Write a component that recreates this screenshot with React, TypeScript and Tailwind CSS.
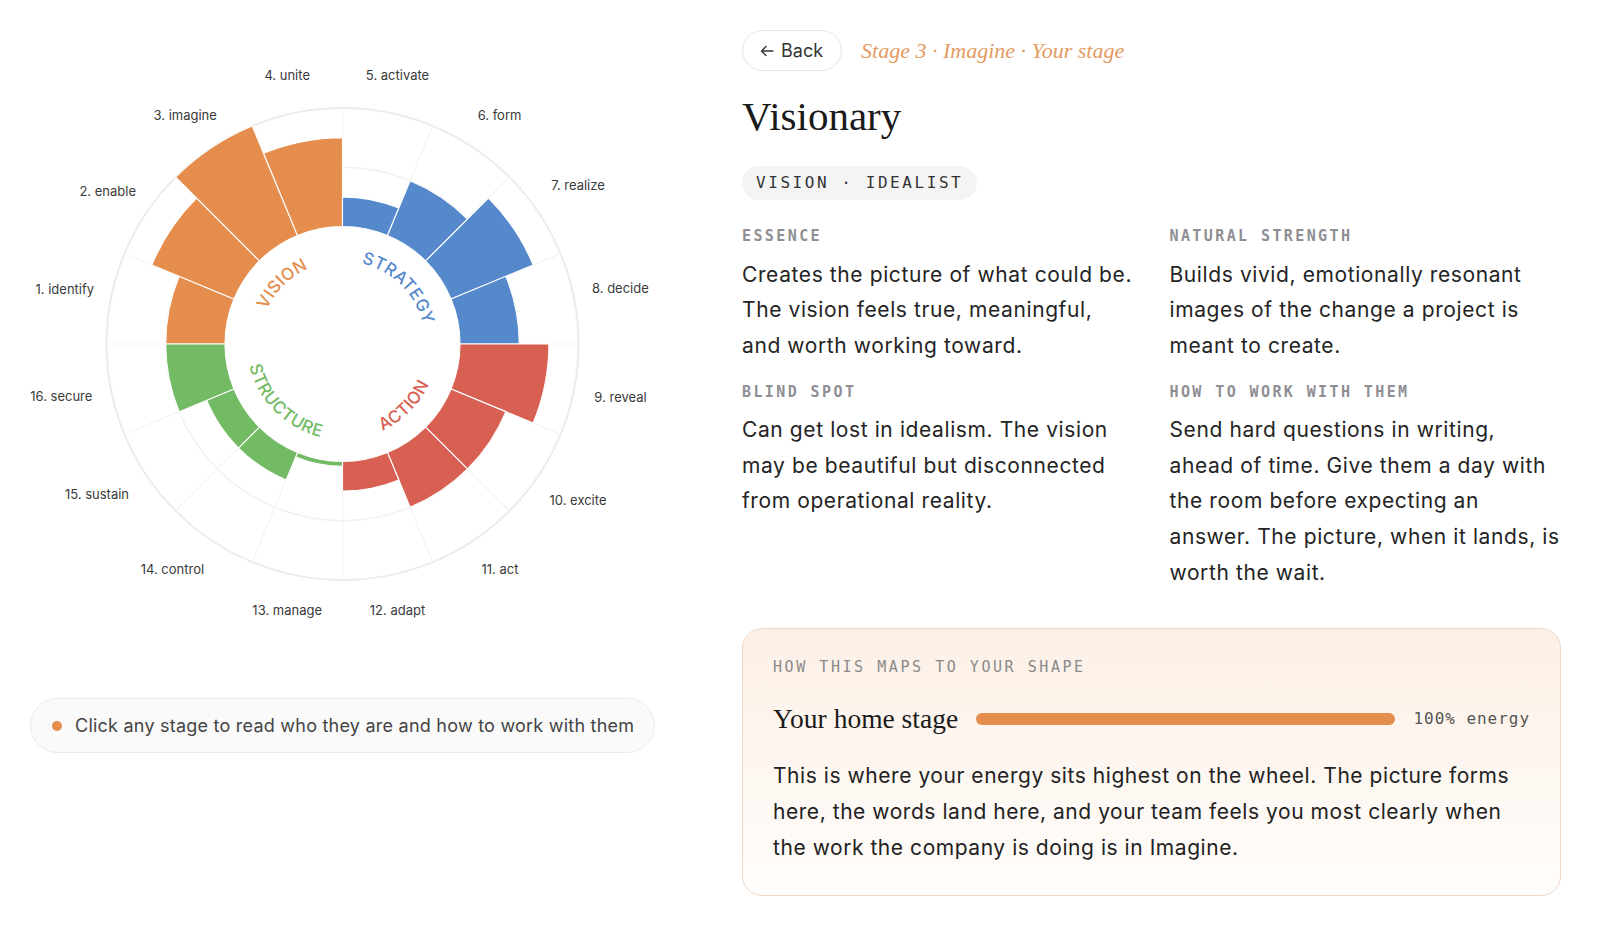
import React from "react";

const CX = 342.5;
const CY = 344;
const R0 = 117.5;
const SPAN = 118.5;
const ROUT = R0 + SPAN;

const ORANGE = "#E48D4D";
const BLUE = "#5689CC";
const RED = "#D86053";
const GREEN = "#72BA64";

type Stage = { name: string; value: number; color: string; lx: number; ly: number };

const stages: Stage[] = [
  { name: "1. identify", value: 0.5, color: ORANGE, lx: 64.8, ly: 288.8 },
  { name: "2. enable", value: 0.75, color: ORANGE, lx: 107.7, ly: 190.8 },
  { name: "3. imagine", value: 1.0, color: ORANGE, lx: 185.2, ly: 115.3 },
  { name: "4. unite", value: 0.75, color: ORANGE, lx: 287.2, ly: 74.5 },
  { name: "5. activate", value: 0.25, color: BLUE, lx: 397.5, ly: 74.5 },
  { name: "6. form", value: 0.5, color: BLUE, lx: 499.5, ly: 115.3 },
  { name: "7. realize", value: 0.75, color: BLUE, lx: 578, ly: 184.7 },
  { name: "8. decide", value: 0.5, color: BLUE, lx: 620.4, ly: 287.8 },
  { name: "9. reveal", value: 0.75, color: RED, lx: 620.5, ly: 397 },
  { name: "10. excite", value: 0.5, color: RED, lx: 578, ly: 500 },
  { name: "11. act", value: 0.5, color: RED, lx: 500, ly: 569.4 },
  { name: "12. adapt", value: 0.25, color: RED, lx: 397.5, ly: 610 },
  { name: "13. manage", value: 0.04, color: GREEN, lx: 287.2, ly: 610 },
  { name: "14. control", value: 0.25, color: GREEN, lx: 172.4, ly: 569.4 },
  { name: "15. sustain", value: 0.25, color: GREEN, lx: 97, ly: 494 },
  { name: "16. secure", value: 0.5, color: GREEN, lx: 61.3, ly: 396 },
];

function pt(r: number, deg: number): string {
  const a = (deg * Math.PI) / 180;
  return `${(CX + r * Math.cos(a)).toFixed(2)} ${(CY - r * Math.sin(a)).toFixed(2)}`;
}

function sector(r0: number, r1: number, a0: number, a1: number): string {
  return `M ${pt(r1, a0)} A ${r1} ${r1} 0 0 1 ${pt(r1, a1)} L ${pt(r0, a1)} A ${r0} ${r0} 0 0 0 ${pt(r0, a0)} Z`;
}

function Wheel() {
  const rTop = 83;
  const rBot = 95.5;
  return (
    <svg width={684} height={660} viewBox="0 0 684 660" className="block">
      <defs>
        <path id="arc-vision" d={`M ${pt(rTop, 180)} A ${rTop} ${rTop} 0 0 1 ${pt(rTop, 90)}`} />
        <path id="arc-strategy" d={`M ${pt(rTop, 90)} A ${rTop} ${rTop} 0 0 1 ${pt(rTop, 0)}`} />
        <path id="arc-structure" d={`M ${pt(rBot, 180)} A ${rBot} ${rBot} 0 0 0 ${pt(rBot, 270)}`} />
        <path id="arc-action" d={`M ${pt(rBot, 270)} A ${rBot} ${rBot} 0 0 0 ${pt(rBot, 360)}`} />
      </defs>

      {/* grid rings and spokes */}
      <circle cx={CX} cy={CY} r={ROUT} fill="none" stroke="#ececec" strokeWidth={2} />
      <circle cx={CX} cy={CY} r={R0 + SPAN / 2} fill="none" stroke="#f1f1f1" strokeWidth={1.5} />
      {Array.from({ length: 16 }).map((_, i) => {
        const a = 180 - 22.5 * i;
        return (
          <path key={i} d={`M ${pt(R0, a)} L ${pt(ROUT, a)}`} stroke="#f3f3f3" strokeWidth={1.2} />
        );
      })}

      {/* stage bars */}
      {stages.map((s, i) => {
        const a0 = 180 - 22.5 * i;
        const a1 = a0 - 22.5;
        return (
          <path
            key={s.name}
            d={sector(R0, R0 + SPAN * s.value, a0, a1)}
            fill={s.color}
            stroke="#ffffff"
            strokeWidth={1.1}
          />
        );
      })}

      {/* stage names */}
      {stages.map((s) => (
        <text
          key={`l-${s.name}`}
          x={s.lx}
          y={s.ly}
          textAnchor="middle"
          dominantBaseline="central"
          fontFamily="Inter, 'Noto Sans', sans-serif"
          fontSize={13}
          fill="#3a3a3a"
        >
          {s.name}
        </text>
      ))}

      {/* quadrant names */}
      <g fontFamily="Inter, 'Noto Sans', sans-serif" fontSize={17} fontWeight={500} letterSpacing={0.3}>
        <text fill={ORANGE}>
          <textPath href="#arc-vision" startOffset="50%" textAnchor="middle">VISION</textPath>
        </text>
        <text fill={BLUE}>
          <textPath href="#arc-strategy" startOffset="50%" textAnchor="middle">STRATEGY</textPath>
        </text>
        <text fill={GREEN}>
          <textPath href="#arc-structure" startOffset="50%" textAnchor="middle">STRUCTURE</textPath>
        </text>
        <text fill={RED}>
          <textPath href="#arc-action" startOffset="50%" textAnchor="middle">ACTION</textPath>
        </text>
      </g>
    </svg>
  );
}

function Field({ label, children }: { label: string; children: React.ReactNode }) {
  return (
    <div className="flex flex-col">
      <div className="font-['DejaVu_Sans_Mono',monospace] text-[15px] leading-[19.5px] font-bold tracking-[0.16em] text-[#8e8e93]">
        {label}
      </div>
      <p className="mt-[10px] text-[21px] leading-[1.7] tracking-[0.6px] text-[#242424]">{children}</p>
    </div>
  );
}

export default function App() {
  return (
    <div className="flex w-full h-[928px] bg-white font-['Inter','Noto_Sans',sans-serif] text-[#222] overflow-hidden">
      {/* wheel column */}
      <div className="w-[684px] shrink-0 flex flex-col">
        <Wheel />
        <div className="ml-[30px] mt-[38px] w-[625px] h-[55px] rounded-full border border-[#ebebeb] bg-[#fafafa] flex items-center pl-[21px] gap-[13px]">
          <span className="w-[10px] h-[10px] rounded-full bg-[#E48D4D] shrink-0" />
          <span className="text-[18px] tracking-[0.23px] text-[#444] whitespace-nowrap">
            Click any stage to read who they are and how to work with them
          </span>
        </div>
      </div>

      {/* detail column */}
      <div className="ml-[58px] w-[819px] shrink-0 pt-[30px] flex flex-col">
        <div className="flex items-center h-[41px] gap-[19px]">
          <button className="h-[41px] flex items-center gap-[7px] pl-[17px] pr-[18px] rounded-full border border-[#e6e6e6] bg-white text-[18px] text-[#333]">
            <svg width="14" height="12" viewBox="0 0 14 12" fill="none">
              <path d="M13 6H1.5M6 1.5 1.5 6 6 10.5" stroke="#333" strokeWidth="1.4" strokeLinecap="round" strokeLinejoin="round" />
            </svg>
            <span>Back</span>
          </button>
          <span className="font-['Liberation_Serif',serif] italic text-[22px] text-[#E39A62] whitespace-nowrap">
            Stage 3 · Imagine · Your stage
          </span>
        </div>

        <h1 className="mt-[21px] font-['Liberation_Serif',serif] text-[41px] leading-[48px] text-[#1a1a1a]">
          Visionary
        </h1>

        <div className="mt-[26px] self-start h-[34px] flex items-center px-[14px] rounded-full bg-[#f4f4f5] font-['DejaVu_Sans_Mono',monospace] text-[16px] tracking-[0.16em] text-[#333]">
          VISION · IDEALIST
        </div>

        <div className="mt-[27px] grid grid-cols-2 gap-x-[36px] gap-y-[19px]">
          <Field label="ESSENCE">
            Creates the picture of what could be. The vision feels true, meaningful, and worth working toward.
          </Field>
          <Field label="NATURAL STRENGTH">
            Builds vivid, emotionally resonant images of the change a project is meant to create.
          </Field>
          <Field label="BLIND SPOT">
            Can get lost in idealism. The vision may be beautiful but disconnected from operational reality.
          </Field>
          <Field label="HOW TO WORK WITH THEM">
            Send hard questions in writing, ahead of time. Give them a day with the room before expecting an answer. The picture, when it lands, is worth the wait.
          </Field>
        </div>

        <div className="mt-[37px] rounded-[20px] border border-[#f1d8c4] bg-linear-to-b from-[#fcf0e6] to-[#fffdfb] px-[30px] pt-[28px] pb-[29px]">
          <div className="font-['DejaVu_Sans_Mono',monospace] text-[15px] leading-[20px] tracking-[0.17em] text-[#8a8a8a]">
            HOW THIS MAPS TO YOUR SHAPE
          </div>
          <div className="mt-[25px] flex items-center gap-[18px]">
            <span className="font-['Liberation_Serif',serif] text-[27.5px] leading-[34px] text-[#1a1a1a] whitespace-nowrap">
              Your home stage
            </span>
            <div className="flex-1 h-[12px] rounded-full bg-[#E48D4D]" />
            <span className="font-['DejaVu_Sans_Mono',monospace] text-[16px] tracking-[0.06em] text-[#555] whitespace-nowrap">
              100% energy
            </span>
          </div>
          <p className="mt-[22px] text-[21px] leading-[36px] tracking-[0.55px] text-[#222]">
            This is where your energy sits highest on the wheel. The picture forms here, the words land here, and your team feels you most clearly when the work the company is doing is in Imagine.
          </p>
        </div>
      </div>
    </div>
  );
}
